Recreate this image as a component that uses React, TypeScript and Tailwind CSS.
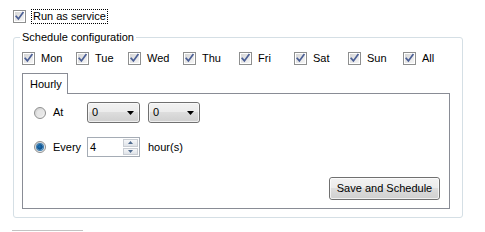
import React from "react";

const CheckBox = () => (
  <span className="relative inline-block w-[13px] h-[13px] shrink-0 border border-[#8e8f8f] bg-white">
    <span className="absolute inset-[1px] bg-[linear-gradient(135deg,#d6d6d6,#f6f6f6)]" />
    <svg className="absolute left-0 top-0" width="11" height="11" viewBox="0 0 11 11">
      <path d="M2.2 5.4 L4.4 7.9 L8.9 1.8" stroke="#4b5f95" strokeWidth="1.7" fill="none" strokeLinecap="square" />
    </svg>
  </span>
);

const Radio = ({ checked }: { checked?: boolean }) => (
  <span className="relative inline-block w-[12px] h-[12px] shrink-0 rounded-full border border-[#8e8f8f] bg-[linear-gradient(135deg,#cfcfcf,#f7f7f7)]">
    {checked ? (
      <span className="absolute left-[2px] top-[2px] w-[6px] h-[6px] rounded-full bg-[radial-gradient(circle_at_40%_40%,#1a73b8_0%,#0c4f8c_55%,#7cc2ee_100%)] ring-1 ring-[#3d7fb3]" />
    ) : (
      <span className="absolute left-[2px] top-[2px] w-[6px] h-[6px] rounded-full bg-[#e6e6e6]" />
    )}
  </span>
);

const Combo = ({ w }: { w: string }) => (
  <div
    className={`${w} h-[21px] relative flex items-center rounded-[3px] border border-[#707070] bg-[linear-gradient(#f2f2f2_0%,#ebebeb_50%,#dddddd_50%,#cfcfcf_100%)]`}
  >
    <span className="absolute inset-0 rounded-[2px] border border-[#fcfcfc]/70" />
    <span className="pl-[4px] text-black">0</span>
    <svg className="absolute right-[5px] top-[8px]" width="7" height="4" viewBox="0 0 7 4">
      <path d="M0 0 H7 L3.5 4 Z" fill="#000" />
    </svg>
  </div>
);

const days: [string, string][] = [
  ["Mon", "w-[54px]"],
  ["Tue", "w-[52px]"],
  ["Wed", "w-[55px]"],
  ["Thu", "w-[56px]"],
  ["Fri", "w-[55px]"],
  ["Sat", "w-[54px]"],
  ["Sun", "w-[55px]"],
  ["All", "w-[40px]"],
];

export default function App() {
  return (
    <div className="w-[485px] h-[232px] overflow-hidden bg-white font-['Liberation_Sans',Arial,sans-serif] text-[11px] leading-[13px] text-black">
      {/* Run as service */}
      <div className="flex items-center pl-[13px] pt-[9px] h-[24px]">
        <CheckBox />
        <span className="ml-[5px] h-[15px] flex items-center border border-dotted border-black px-[1px]">
          Run as service
        </span>
      </div>

      {/* Group box */}
      <div className="relative ml-[13px] mt-[13px] w-[450px] h-[181px] rounded-[3px] border border-[#d5dfe5]">
        <span className="absolute left-[6px] top-[-7px] bg-white px-[2px]">Schedule configuration</span>

        <div className="pl-[8px] pt-[14px]">
          <div className="flex items-center h-[13px]">
            {days.map(([d, w]) => (
              <div key={d} className={`flex items-center ${w}`}>
                <CheckBox />
                <span className="ml-[6px]">{d}</span>
              </div>
            ))}
          </div>

          {/* Tab control */}
          <div className="mt-[8px]">
            <div className="relative z-10 -mb-[1px] w-[46px] h-[21px] border border-b-0 border-[#898c95] bg-white pl-[7px] flex items-center">
              Hourly
            </div>
            <div className="w-[428px] h-[116px] border border-[#898c95] bg-white pl-[11px] pt-[8px] pr-[9px]">
              <div className="flex items-center h-[21px]">
                <div className="flex items-center w-[53px]">
                  <Radio />
                  <span className="ml-[7px]">At</span>
                </div>
                <Combo w="w-[53px]" />
                <div className="ml-[8px]">
                  <Combo w="w-[52px]" />
                </div>
              </div>

              <div className="flex items-center h-[20px] mt-[14px]">
                <div className="flex items-center w-[53px]">
                  <Radio checked />
                  <span className="ml-[7px]">Every</span>
                </div>
                <div className="relative w-[53px] h-[20px] border border-[#a5acb5] bg-white flex items-center">
                  <span className="pl-[2px]">4</span>
                  <div className="absolute right-[1px] top-[1px] bottom-[1px] w-[15px] flex flex-col gap-[1px]">
                    <div className="flex-1 flex items-center justify-center border border-[#c9cdd3] bg-[linear-gradient(#f6f7f9,#dfe3e8)]">
                      <svg width="5" height="3" viewBox="0 0 5 3">
                        <path d="M0 3 L2.5 0 L5 3 Z" fill="#4e6a8e" />
                      </svg>
                    </div>
                    <div className="flex-1 flex items-center justify-center border border-[#c9cdd3] bg-[linear-gradient(#f6f7f9,#dfe3e8)]">
                      <svg width="5" height="3" viewBox="0 0 5 3">
                        <path d="M0 0 L5 0 L2.5 3 Z" fill="#4e6a8e" />
                      </svg>
                    </div>
                  </div>
                </div>
                <span className="ml-[8px]">hour(s)</span>
              </div>

              <div className="flex justify-end mt-[20px]">
                <button className="relative w-[111px] h-[23px] rounded-[3px] border border-[#707070] bg-[linear-gradient(#f2f2f2_0%,#ebebeb_50%,#dddddd_50%,#cfcfcf_100%)] text-black">
                  <span className="absolute inset-0 rounded-[2px] border border-white/70" />
                  Save and Schedule
                </button>
              </div>
            </div>
          </div>
        </div>
      </div>

      <div className="ml-[12px] mt-[12px] w-[71px] h-[1px] bg-[#c3c3c3]" />
    </div>
  );
}
